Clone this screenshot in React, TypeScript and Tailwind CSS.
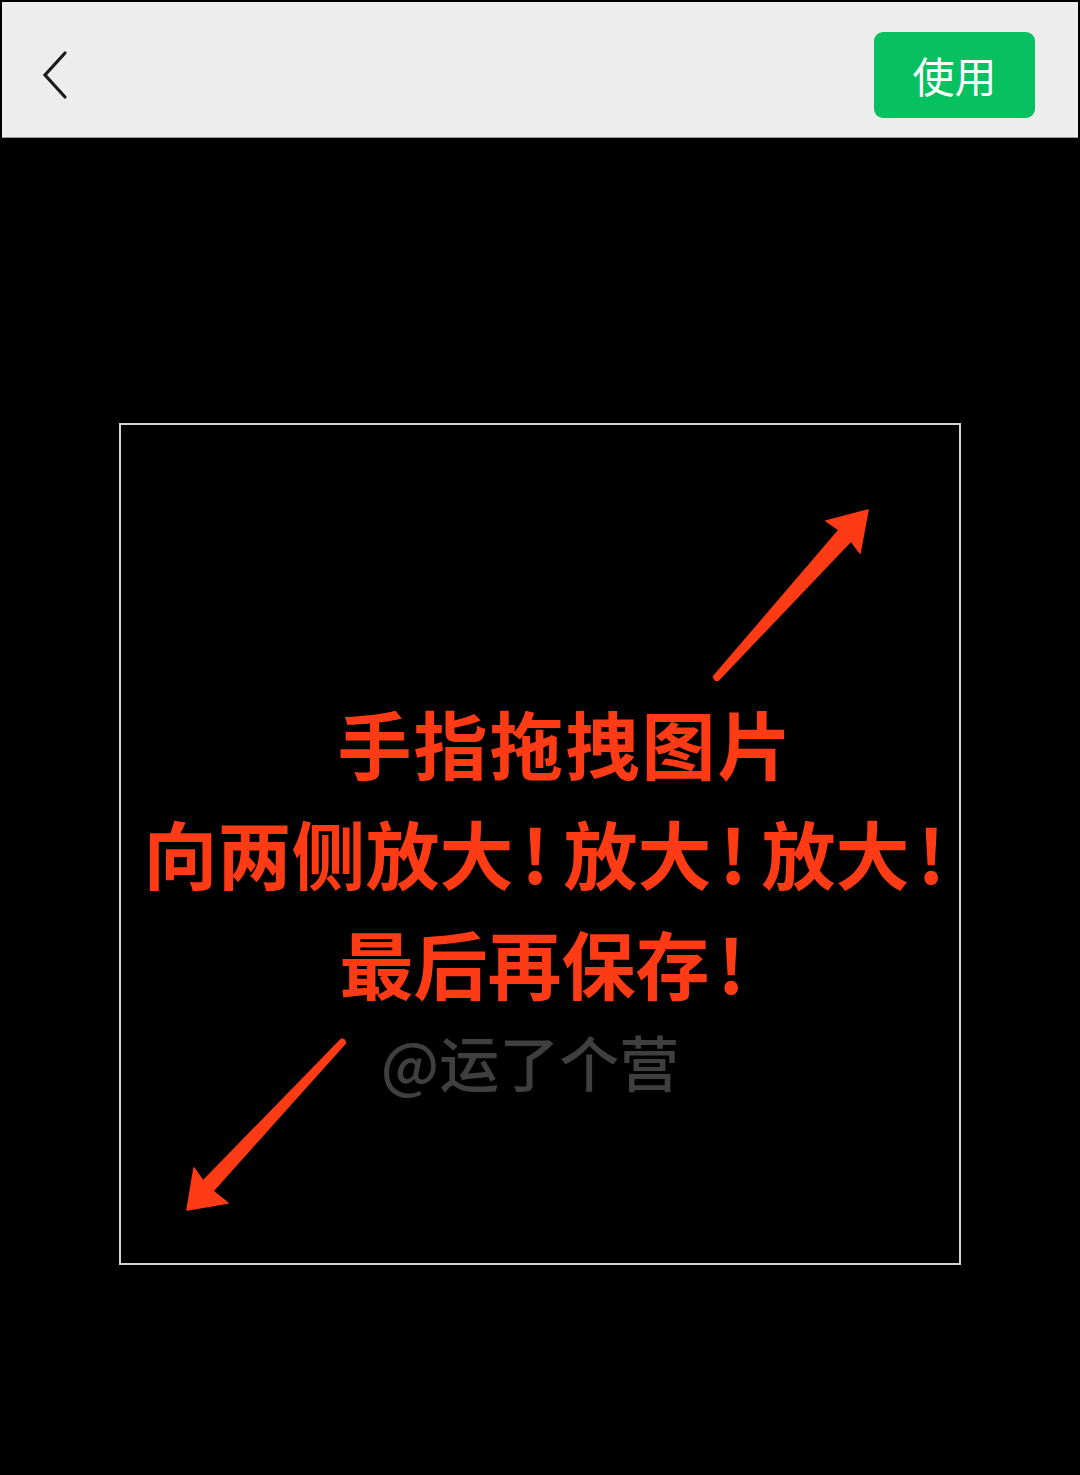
import React from "react";

const cjk = { fontFamily: '"Noto Sans CJK SC", "Noto Sans", sans-serif' };

function Bang() {
  return <span className="inline-block w-[50px] pl-[8px] text-left">!</span>;
}

export default function App() {
  return (
    <div className="w-[1080px] h-[1475px] bg-black overflow-hidden" style={cjk}>
      {/* Top bar */}
      <div className="mx-[2px] mt-[2px] h-[136px] bg-[#ededed] border-b border-[#9a9a9a] flex items-center justify-between pt-[10px] pl-[38px] pr-[43px]">
        <svg width="30" height="50" viewBox="0 0 30 50" className="block">
          <polyline
            points="25,3 5,25 25,47"
            fill="none"
            stroke="#1b1b1b"
            strokeWidth="3.2"
            strokeLinecap="round"
            strokeLinejoin="miter"
          />
        </svg>
        <button className="w-[161px] h-[86px] rounded-[9px] bg-[#07c160] text-white text-[42px] leading-none flex items-center justify-center">
          使用
        </button>
      </div>

      {/* Crop frame */}
      <div className="relative mx-auto mt-[285px] w-[842px] h-[842px] border-2 border-[#d4d4d4] flex flex-col items-center pt-[262px]">
        <div className="text-[#ff3b15] font-bold text-[74px] leading-[110px] whitespace-nowrap flex flex-col items-center">
          <div className="pl-[51px] tracking-[2px]">手指拖拽图片</div>
          <div className="pl-[23px]">
            向两侧放大<Bang />放大<Bang />放大<Bang />
          </div>
          <div className="pl-[19px]">
            最后再保存<Bang />
          </div>
        </div>
        <div className="mt-[0px] pr-[20px] text-[#3f3f3f] text-[60px] leading-[87px] font-medium whitespace-nowrap">
          @运了个营
        </div>

        <svg
          className="absolute inset-0 pointer-events-none"
          width="838"
          height="838"
          viewBox="121 425 838 838"
        >
          <path
            d="M868,510 L860,553 L851,541 L718.5,680 Q715,682 713.5,676.5 L839,530 L826,521 Z"
            fill="#ff3b15"
            stroke="#ff3b15"
            strokeWidth="1.5"
            strokeLinejoin="round"
          />
          <path
            d="M187,1210 L194,1168 L203,1181 L341,1039.5 Q344.5,1038 345.5,1043 L213,1191 L228,1203 Z"
            fill="#ff3b15"
            stroke="#ff3b15"
            strokeWidth="1.5"
            strokeLinejoin="round"
          />
        </svg>
      </div>
    </div>
  );
}
